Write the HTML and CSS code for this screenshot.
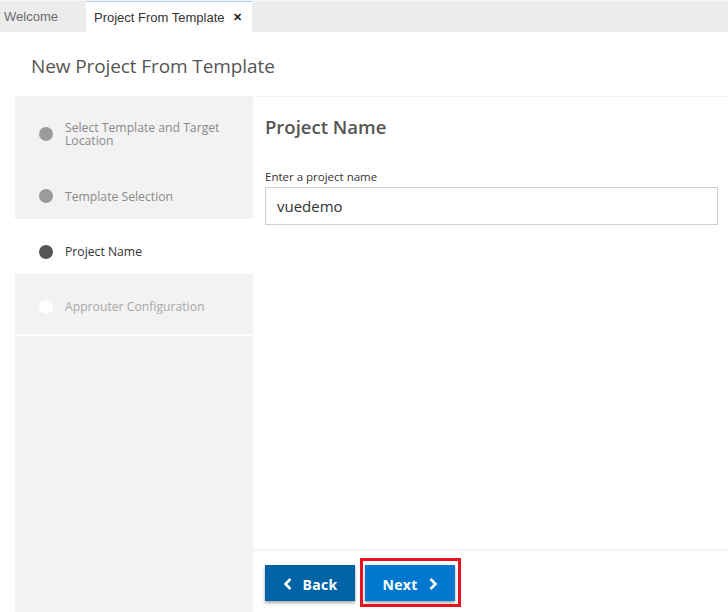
FILE: index.html
```html
<!DOCTYPE html>
<html>
<head>
<meta charset="utf-8">
<link rel="stylesheet" href="styles.css">
</head>
<body>
<div class="tabs">
  <div class="tab">Welcome</div>
  <div class="tab tab-active">Project From Template <span class="close">✕</span></div>
</div>
<div class="header"><h1 class="title">New Project From Template</h1></div>
<div class="wizard">
  <aside class="steps">
    <div class="step step-done step-first"><span class="dot"></span><span class="step-label">Select Template and Target<br>Location</span></div>
    <div class="step step-done"><span class="dot"></span><span class="step-label">Template Selection</span></div>
    <div class="step step-active"><span class="dot"></span><span class="step-label">Project Name</span></div>
    <div class="step step-todo step-last"><span class="dot"></span><span class="step-label">Approuter Configuration</span></div>
    <div class="steps-rest"></div>
  </aside>
  <main class="content">
    <section class="form">
      <h2 class="form-title">Project Name</h2>
      <label class="field-label">Enter a project name</label>
      <div class="input">vuedemo</div>
    </section>
    <footer class="actions">
      <button class="btn btn-back"><svg class="chev" width="10" height="14" viewBox="0 0 10 14"><polyline points="7.5,2 2.5,7 7.5,12" fill="none" stroke="#fff" stroke-width="2.6"/></svg><span>Back</span></button>
      <div class="next-wrap">
        <button class="btn btn-next"><span>Next</span><svg class="chev" width="10" height="14" viewBox="0 0 10 14"><polyline points="2.5,2 7.5,7 2.5,12" fill="none" stroke="#fff" stroke-width="2.6"/></svg></button>
        <span class="highlight"></span>
      </div>
    </footer>
  </main>
</div>
</body>
</html>
```
FILE: styles.css
```css
* { box-sizing: border-box; }
html, body { margin: 0; padding: 0; }
body {
  width: 728px;
  height: 612px;
  overflow: hidden;
  background: #fff;
  font-family: "Open Sans", "Noto Sans", sans-serif;
  display: flex;
  flex-direction: column;
}
.tabs {
  height: 32px;
  background: #ececec;
  display: flex;
  border-top: 1px solid #f4f4f4;
  flex-shrink: 0;
}
.tab {
  font-family: "Liberation Sans", Arial, sans-serif;
  font-size: 13px;
  color: #6b6b6b;
  padding: 0 0 0 4px;
  width: 86px;
  display: flex;
  align-items: center;
  height: 31px;
}
.tab-active {
  width: 166px;
  background: #fff;
  color: #333;
  padding-left: 8px;
  border-top: 1px solid #a9cfec;
  height: 32px;
}
.close {
  font-size: 11px;
  margin-left: 8px;
  color: #222;
  font-weight: bold;
}
.header {
  height: 64px;
  display: flex;
  align-items: center;
  padding: 4px 0 0 31px;
  flex-shrink: 0;
}
.title {
  margin: 0;
  font-size: 19px;
  font-weight: 400;
  color: #555;
  letter-spacing: -0.1px;
}
.wizard {
  flex: 1;
  display: flex;
  padding-left: 15px;
  min-height: 0;
}
.steps {
  width: 238px;
  display: flex;
  flex-direction: column;
  background: #f2f2f2;
}
.step {
  display: flex;
  align-items: center;
  padding: 25px 0 14px 24px;
  font-size: 12.2px;
  min-height: 55px;
}
.step-first { height: 68px; padding-top: 24px; padding-bottom: 17px; }
.step-done:not(.step-first) { padding-top: 24px; padding-bottom: 15px; }
.step-last { height: 62px; padding-top: 26px; padding-bottom: 20px; border-bottom: 2px solid #fff; }
.dot {
  width: 14px;
  height: 14px;
  border-radius: 50%;
  flex-shrink: 0;
  margin-right: 12px;
}
.step-label { line-height: 13px; }
.step-done .dot { background: #9b9b9b; }
.step-done .step-label { color: #8a8a8a; }
.step-active { background: #fff; }
.step-active .dot { background: #555; }
.step-active .step-label { color: #333; line-height: 16px; }
.step-todo .dot { background: #fff; }
.step-todo .step-label { color: #a8a8a8; line-height: 16px; }
.steps-rest { flex: 1; }
.content {
  flex: 1;
  display: flex;
  flex-direction: column;
  border-top: 1px solid #f3f3f3;
}
.form {
  flex: 1;
  padding: 16px 10px 0 12px;
}
.form-title {
  margin: 0;
  font-size: 18.5px;
  font-weight: 600;
  color: #555;
  line-height: 28px;
}
.field-label {
  display: block;
  margin-top: 28px;
  font-size: 11.5px;
  color: #333;
  line-height: 16px;
}
.input {
  margin-top: 2px;
  height: 38px;
  border: 1px solid #cfcfcf;
  padding-left: 11px;
  display: flex;
  align-items: center;
  font-size: 15px;
  color: #333;
}
.actions {
  border-top: 2px solid #f2f2f2;
  padding: 14px 0 11px 12px;
  display: flex;
  gap: 10px;
  height: 63px;
  flex-shrink: 0;
}
.btn {
  width: 90px;
  height: 36px;
  border: none;
  color: #fff;
  font-family: "Open Sans", "Noto Sans", sans-serif;
  font-size: 14px;
  font-weight: 700;
  display: flex;
  align-items: center;
  justify-content: center;
  gap: 10px;
  box-shadow: 0 2px 3px rgba(0,0,0,0.35);
  padding: 2px 0 0 0;
  letter-spacing: 0.3px;
}
.btn-back { background: #0063a6; }
.btn-next { background: #0078cf; }
.next-wrap { position: relative; }
.highlight {
  position: absolute;
  left: -5px;
  top: -7px;
  right: -6px;
  bottom: -6px;
  border: 3px solid #e8131c;
}
```
